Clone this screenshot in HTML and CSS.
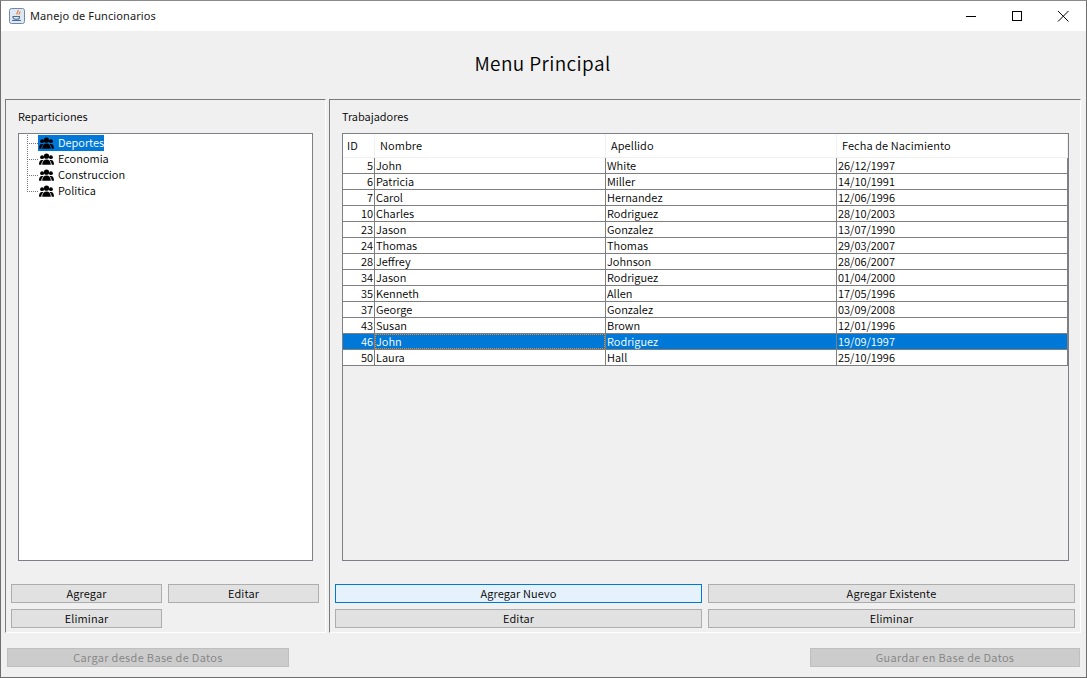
FILE: index.html
```html
<!DOCTYPE html>
<html lang="es">
<head>
    <meta charset="UTF-8">
    <meta name="viewport" content="width=device-width, initial-scale=1.0">
    <title>Manejo de Funcionarios</title>
    <link rel="stylesheet" href="styles.css">
</head>
<body>
    <svg class="defs" width="0" height="0">
        <symbol id="group" viewBox="0 0 16 12">
            <circle cx="8" cy="3" r="2.8"/>
            <circle cx="3.300" cy="4" r="2.100"/>
            <circle cx="12.700" cy="4" r="2.100"/>
            <path d="M3.400 12c0-3.400 1.800-5.500 4.600-5.500s4.600 2.100 4.600 5.500z"/>
            <path d="M0 12c0-3 1-5 3.300-5 .7 0 1.200.2 1.600.4C3.500 8.500 2.600 10 2.500 12z"/>
            <path d="M16 12c0-3-1-5-3.300-5-.7 0-1.200.2-1.600.4 1.400 1.100 2.300 2.600 2.400 4.600z"/>
        </symbol>
    </svg>
    <div class="window">
        <div class="titlebar">
            <svg class="app-icon" width="16" height="16" viewBox="0 0 16 16">
                <rect x=".5" y=".5" width="15" height="15" rx="2" fill="#dfe8f2" stroke="#6f8aa6"/>
                <path d="M9 2c1 1.500-2 2.500-1 4.500M11 3.500c.5 1-1.500 1.500-.8 3" fill="none" stroke="#e2762a" stroke-width="1.100"/>
                <path d="M4 8.500h6.500v1c0 1.200-1 1.800-3 1.800s-3.500-.6-3.500-1.800zM3 12.500h9" fill="none" stroke="#4a6d94" stroke-width="1.100"/>
            </svg>
            <span class="title-text">Manejo de Funcionarios</span>
            <div class="win-controls">
                <svg width="46" height="31" viewBox="0 0 46 31"><path d="M18 15.500h10" stroke="#000"/></svg>
                <svg width="46" height="31" viewBox="0 0 46 31"><rect x="18.500" y="10.500" width="9" height="9" fill="none" stroke="#000"/></svg>
                <svg width="46" height="31" viewBox="0 0 46 31"><path d="M18 10l10.500 10.500M28.500 10L18 20.500" stroke="#000" fill="none"/></svg>
            </div>
        </div>

        <div class="content">
            <h1 class="heading">Menu Principal</h1>

            <div class="panels">
                <section class="panel panel-left">
                    <div class="panel-title">Reparticiones</div>
                    <div class="tree">
                        <div class="tree-row">
                            <span class="branch"></span>
                            <span class="node selected"><svg class="node-icon"><use href="#group"/></svg>Deportes</span>
                        </div>
                        <div class="tree-row">
                            <span class="branch"></span>
                            <span class="node"><svg class="node-icon"><use href="#group"/></svg>Economia</span>
                        </div>
                        <div class="tree-row">
                            <span class="branch"></span>
                            <span class="node"><svg class="node-icon"><use href="#group"/></svg>Construccion</span>
                        </div>
                        <div class="tree-row">
                            <span class="branch branch-last"></span>
                            <span class="node"><svg class="node-icon"><use href="#group"/></svg>Politica</span>
                        </div>
                    </div>
                    <div class="btn-grid">
                        <button class="btn">Agregar</button>
                        <button class="btn">Editar</button>
                        <button class="btn">Eliminar</button>
                    </div>
                </section>

                <section class="panel panel-right">
                    <div class="panel-title">Trabajadores</div>
                    <div class="table-box">
                        <table class="grid">
                            <colgroup>
                                <col class="col-id"><col class="col-wide"><col class="col-wide"><col>
                            </colgroup>
                            <thead>
                                <tr><th>ID</th><th>Nombre</th><th>Apellido</th><th>Fecha de Nacimiento</th></tr>
                            </thead>
                            <tbody>
                                <tr><td>5</td><td>John</td><td>White</td><td>26/12/1997</td></tr>
                                <tr><td>6</td><td>Patricia</td><td>Miller</td><td>14/10/1991</td></tr>
                                <tr><td>7</td><td>Carol</td><td>Hernandez</td><td>12/06/1996</td></tr>
                                <tr><td>10</td><td>Charles</td><td>Rodriguez</td><td>28/10/2003</td></tr>
                                <tr><td>23</td><td>Jason</td><td>Gonzalez</td><td>13/07/1990</td></tr>
                                <tr><td>24</td><td>Thomas</td><td>Thomas</td><td>29/03/2007</td></tr>
                                <tr><td>28</td><td>Jeffrey</td><td>Johnson</td><td>28/06/2007</td></tr>
                                <tr><td>34</td><td>Jason</td><td>Rodriguez</td><td>01/04/2000</td></tr>
                                <tr><td>35</td><td>Kenneth</td><td>Allen</td><td>17/05/1996</td></tr>
                                <tr><td>37</td><td>George</td><td>Gonzalez</td><td>03/09/2008</td></tr>
                                <tr><td>43</td><td>Susan</td><td>Brown</td><td>12/01/1996</td></tr>
                                <tr class="row-selected"><td>46</td><td class="cell-focus">John</td><td>Rodriguez</td><td>19/09/1997</td></tr>
                                <tr><td>50</td><td>Laura</td><td>Hall</td><td>25/10/1996</td></tr>
                            </tbody>
                        </table>
                    </div>
                    <div class="btn-grid btn-grid-right">
                        <button class="btn btn-focus">Agregar Nuevo</button>
                        <button class="btn">Agregar Existente</button>
                        <button class="btn">Editar</button>
                        <button class="btn">Eliminar</button>
                    </div>
                </section>
            </div>

            <div class="footer">
                <button class="btn btn-disabled btn-load" disabled>Cargar desde Base de Datos</button>
                <button class="btn btn-disabled btn-save" disabled>Guardar en Base de Datos</button>
            </div>
        </div>
    </div>
</body>
</html>
```

FILE: styles.css
```css
* { box-sizing: border-box; }
html, body { margin: 0; height: 100%; }
body { font-family: "Noto Sans CJK JP", "Noto Sans", sans-serif; font-size: 11px; font-weight: 350; color: #000; background: #f0f0f0; overflow: hidden; }
.defs { display: block; height: 0; }

.window { width: 1087px; height: 678px; border: 1px solid #6e6e6e; border-top-color: #8a8a8a; display: flex; flex-direction: column; background: #f0f0f0; }

.titlebar { height: 30px; background: #fff; display: flex; align-items: center; padding-left: 8px; flex: none; }
.app-icon { flex: none; }
.title-text { font-family: "Noto Sans", sans-serif; font-size: 11px; font-weight: 400; letter-spacing: .1px; margin-left: 5px; color: #1a1a1a; padding-bottom: 1px; }
.win-controls { margin-left: auto; display: flex; }
.win-controls svg { display: block; }

.content { flex: 1; display: flex; flex-direction: column; min-height: 0; }
.heading { margin: 0; height: 68px; flex: none; display: flex; align-items: center; justify-content: center; font-size: 19px; letter-spacing: .4px; font-weight: 350; padding-bottom: 5px; padding-right: 2px; }

.panels { display: flex; gap: 3px; height: 534px; padding-left: 4px; padding-right: 5px; flex: none; }
.panel { border: 1px solid #fff; border-top-color: #7a7a7a; border-left-color: #7a7a7a; display: flex; flex-direction: column; }
.panel-left { width: 321px; padding: 0 6px 0 5px; }
.panel-right { flex: 1; padding: 0 5px 0 5px; }
.panel-title { height: 33px; padding: 9px 0 0 7px; line-height: 14px; flex: none; }

.tree { margin: 0 6px 0 7px; height: 428px; flex: none; background: #fff; border: 1px solid #7f7f87; padding: 1px 0 0 8px; line-height: 16px; }
.tree-row { display: flex; height: 16px; }
.branch {
    width: 11px; height: 16px; flex: none;
    background:
        repeating-linear-gradient(to bottom, #777 0 1px, transparent 1px 2px) left top / 1px 100% no-repeat,
        repeating-linear-gradient(to right, #777 0 1px, transparent 1px 2px) left 8px / 100% 1px no-repeat;
}
.branch-last { background-size: 1px 9px, 100% 1px; }
.node { display: inline-flex; align-items: center; height: 16px; padding-bottom: 2px; }
.node-icon { width: 15px; height: 12px; margin: 2px 4px 0 1px; fill: #000; }
.selected { background: #0078d7; color: #fff; }

.table-box { margin: 0 6px 0 7px; height: 428px; flex: none; background: #f0f0f0; border: 1px solid #7f7f87; }
.grid { width: 100%; border-collapse: separate; border-spacing: 0; table-layout: fixed; background: #fff; }
.col-id { width: 32px; }
.col-wide { width: 231px; }
.grid th { height: 24px; padding: 0 0 1px 5px; font-weight: 350; letter-spacing: .1px; text-align: left; background: #fff; border-right: 1px solid #f0f0f0; border-bottom: 1px solid #f0f0f0; }
.grid th:first-child { padding-left: 4px; }
.grid td { height: 16px; padding: 0 0 0 1px; line-height: 15px; border-right: 1px solid #7f7f7f; border-bottom: 1px solid #7f7f7f; white-space: nowrap; }
.grid td:first-child { text-align: right; padding-right: 1px; }
.row-selected td { background: #0078d7; color: #fff; }
.cell-focus { position: relative; }
.cell-focus::after { content: ""; position: absolute; inset: 0; border: 1px dotted #f08a24; }

.btn-grid { display: grid; grid-template-columns: 151px 151px; gap: 6px; margin-top: 23px; }
.btn-grid-right { grid-template-columns: 367px 367px; }
.btn { height: 19px; padding: 0 0 2px; font: inherit; letter-spacing: .15px; color: #000; background: #e1e1e1; border: 1px solid #adadad; border-radius: 0; }
.btn-focus { background: #e5f1fb; border-color: #0078d7; }

.footer { display: flex; justify-content: space-between; padding: 15px 6px 0 6px; }
.btn-disabled { background: #ccc; border-color: #bfbfbf; color: #838383; letter-spacing: .35px; }
.btn-load { width: 282px; }
.btn-save { width: 270px; }
```
